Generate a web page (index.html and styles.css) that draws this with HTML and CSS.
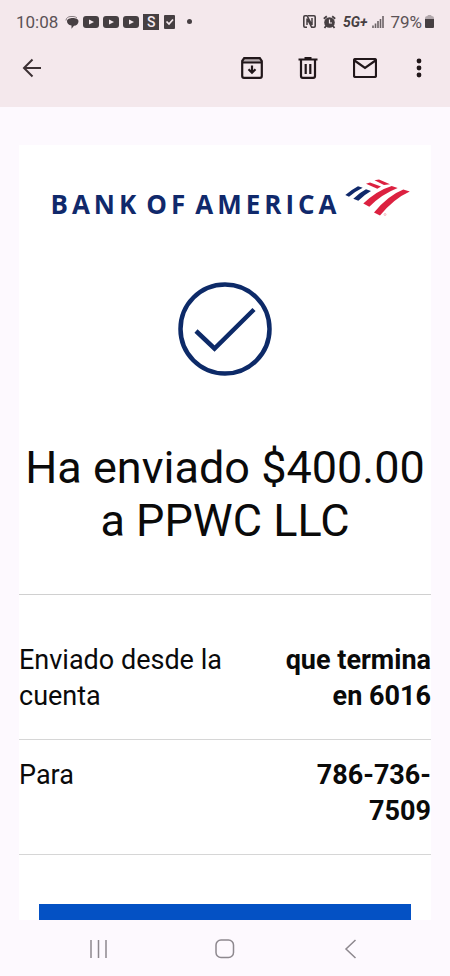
FILE: index.html
```html
<!DOCTYPE html>
<html lang="es">
<head>
<meta charset="utf-8">
<meta name="viewport" content="width=device-width, initial-scale=1">
<title>Ha enviado $400.00</title>
<link rel="stylesheet" href="styles.css">
</head>
<body>
<header class="top">
  <div class="status">
    <div class="status-group">
      <span class="time">10:08</span>
      <svg width="14" height="14" viewBox="0 0 14 14"><path d="M1 5.500C1 3 3 1.500 6 1.500h2q2.500 0 4 1.500" fill="none" stroke="#887f83"/><path d="M2 6.200C2 1.800 13.500 1.800 13.500 6.200c0 2.800-2 4.300-4.500 4.600L6.500 13.800V10.500C3.500 10 2 8.500 2 6.200z" fill="#463f42"/></svg>
      <svg width="16" height="12" viewBox="0 0 16 12"><rect width="16" height="12" rx="3" fill="#463f42"/><path d="M6 3.500l5 2.500-5 2.500z" fill="#f5e9ed"/></svg>
      <svg width="16" height="12" viewBox="0 0 16 12"><rect width="16" height="12" rx="3" fill="#463f42"/><path d="M6 3.500l5 2.500-5 2.500z" fill="#f5e9ed"/></svg>
      <svg width="16" height="12" viewBox="0 0 16 12"><rect width="16" height="12" rx="3" fill="#463f42"/><path d="M6 3.500l5 2.500-5 2.500z" fill="#f5e9ed"/></svg>
      <span class="s-badge">S</span>
      <svg class="check-icon" width="11" height="14" viewBox="0 0 11 14"><rect width="11" height="14" rx="1" fill="#463f42"/><path d="M2.500 6.500l2.500 2.500 4-4.500" fill="none" stroke="#f5e9ed" stroke-width="1.700"/></svg>
      <span class="dot"></span>
    </div>
    <div class="status-group right">
      <svg width="13" height="13" viewBox="0 0 13 13"><path d="M2 .7h2L9 10V3M9.500 12.300H8.700L4 3.500V10" fill="none" stroke="#463f42" stroke-width="1.500"/><path d="M5 .8h6q1.200 0 1.200 1.200v9q0 1.200-1.200 1.200H9M4 12.200H2Q.8 12.200.8 11V2Q.8.800 2 .8" fill="none" stroke="#463f42" stroke-width="1.600"/></svg>
      <svg class="alarm" width="13" height="14" viewBox="0 0 13 14"><circle cx="6.500" cy="7.500" r="5.300" fill="#463f42"/><path d="M.8 3.800l3-2.500M12.200 3.800l-3-2.500M3 11l-1.500 2M10 11l1.500 2" stroke="#463f42" stroke-width="1.800"/><path d="M6.500 4.500v3.500h2.500" fill="none" stroke="#f5e9ed" stroke-width="1.200"/></svg>
      <span class="network">5G+</span>
      <svg width="13" height="12" viewBox="0 0 13 12"><path d="M1 9.500V12M3.500 7.500V12M6 5v7M8.500 3v9M11 0v12" stroke="#6b6266" stroke-width="1.600"/></svg>
      <span class="percent">79%</span>
      <svg width="9" height="13" viewBox="0 0 9 13"><path d="M2.500 1q0-1 1-1h2q1 0 1 1Q9 1 9 3v1H0V3q0-2 2.500-2z" fill="#b1a7ab"/><path d="M0 4h9v8q0 1-1 1H1q-1 0-1-1z" fill="#463f42"/></svg>
    </div>
  </div>
  <div class="toolbar">
    <button class="icon-button back" aria-label="Atrás"><svg width="20" height="20" viewBox="0 0 20 20"><path d="M10.500 1.500L2 10l8.500 8.500M2 10h17" fill="none" stroke="#3c3134" stroke-width="2"/></svg></button>
    <button class="icon-button" aria-label="Archivar"><svg width="22" height="22" viewBox="0 0 22 22"><path d="M3.500 1.500h15L20.500 5h-19z" fill="#b7adb0"/><path d="M1.200 4L3.200 1.200h15.600L20.800 4v15q0 1.800-1.800 1.800H3q-1.800 0-1.800-1.800zM1.200 5.500h19.600M11 8.500v7M7.500 12.200l3.500 3.500 3.500-3.500" fill="none" stroke="#21171a" stroke-width="2.200"/></svg></button>
    <button class="icon-button" aria-label="Eliminar"><svg width="20" height="22" viewBox="0 0 20 22"><path d="M.500 2.500h19M6.500 1.200h7M3 3v16q0 1.800 1.800 1.800h10.400q1.800 0 1.800-1.800V3M7.700 7v10M12.300 7v10" fill="none" stroke="#21171a" stroke-width="2.200"/></svg></button>
    <button class="icon-button" aria-label="Marcar como no leído"><svg width="24" height="20" viewBox="0 0 24 20"><rect x="1" y="1" width="22" height="18" rx="1.500" fill="none" stroke="#21171a" stroke-width="2.200"/><path d="M1.500 2.500L12 10 22.500 2.500" fill="none" stroke="#21171a" stroke-width="2.200"/></svg></button>
    <button class="icon-button more" aria-label="Más opciones"><svg width="6" height="20" viewBox="0 0 6 20"><g fill="#21171a"><circle cx="3" cy="3" r="2.400"/><circle cx="3" cy="10" r="2.400"/><circle cx="3" cy="17" r="2.400"/></g></svg></button>
  </div>
</header>
<main class="mail">
  <article class="card">
    <div class="logo">
      <span class="wordmark"><span>BANK</span> <span>OF</span> <span>AMERICA</span></span>
      <svg class="flag" width="66" height="38" viewBox="0 0 66 38">
        <g fill="#10296b"><path d="M.3 16Q7 10.500 13 7.300l4.700 1.400Q10 12.500 4 17.700z"/><path d="M8.300 19.700Q14 14 21 10.300l5 1.700Q19 16 13.300 21.700z"/></g>
        <g fill="#dc2140"><path d="M21 4.700L25 3.500l11 4-3.700 2.200z"/><path d="M29.500 1.300L34 .5l11 4.700L39 6z"/><path d="M18.300 24.500Q32 11.500 46.700 7l6 2Q37 15 24.300 27.700z"/><path d="M29 33.500Q43 16.500 58.300 10.500l6.500 2Q49 19.500 35 36.500z"/></g>
        <circle cx="40" cy="35.500" r="1" fill="none" stroke="#e97b8b" stroke-width=".5"/>
      </svg>
    </div>
    <svg class="success" width="94" height="94" viewBox="0 0 94 94"><circle cx="47" cy="47" r="44.500" fill="none" stroke="#0d2a68" stroke-width="4.500"/><path d="M18 49l18.500 17.500L76 27.500" fill="none" stroke="#0d2a68" stroke-width="4.500"/></svg>
    <h1>Ha enviado $400.00 a PPWC LLC</h1>
    <dl class="details">
      <div class="row first"><dt>Enviado desde la cuenta</dt><dd>que termina en 6016</dd></div>
      <div class="row"><dt>Para</dt><dd>786-736-7509</dd></div>
    </dl>
    <a class="action" href="#" aria-label="Ver detalles"></a>
  </article>
</main>
<nav class="system">
  <button class="icon-button" aria-label="Recientes"><svg width="20" height="20" viewBox="0 0 20 20"><path d="M2 1v18M9.500 1v18M17 1v18" stroke="#8d888e" stroke-width="1.500"/></svg></button>
  <button class="icon-button" aria-label="Inicio"><svg width="20" height="20" viewBox="0 0 20 20"><rect x="1" y="1" width="17.500" height="17.500" rx="5" fill="none" stroke="#8d888e" stroke-width="1.500"/></svg></button>
  <button class="icon-button" aria-label="Volver"><svg width="20" height="20" viewBox="0 0 20 20"><path d="M14.500 1L5 10l9.500 9" fill="none" stroke="#8d888e" stroke-width="1.500"/></svg></button>
</nav>
</body>
</html>
```
FILE: styles.css
```css
* { box-sizing: border-box; }

body {
  margin: 0;
  height: 100vh;
  display: flex;
  flex-direction: column;
  background: #fdf9fe;
  color: #0a0a0a;
  font-family: Roboto, "Liberation Sans", sans-serif;
}

svg { display: block; flex: none; }

.top {
  flex: none;
  background: #f4e8ec;
  padding-bottom: 14px;
}

.status {
  display: flex;
  justify-content: space-between;
  align-items: center;
  height: 43px;
  padding: 0 16px;
  color: #5b5256;
  font-size: 17px;
}

.status-group {
  display: flex;
  align-items: center;
  gap: 4px;
}

.status-group .time { margin-right: 3px; }
.status-group.right { gap: 5px; }
.alarm { margin: 0 2px; }

.s-badge {
  width: 16px;
  height: 16px;
  background: #463f42;
  color: #f5e9ed;
  font-size: 14px;
  font-weight: 500;
  line-height: 16px;
  text-align: center;
}

.check-icon { margin: 0 8px 0 1px; }

.dot {
  width: 5px;
  height: 5px;
  border-radius: 50%;
  background: #463f42;
}

.network {
  color: #463f42;
  font-size: 14px;
  font-style: italic;
  font-weight: 700;
}

.percent { margin-right: -2px; }

.toolbar {
  display: flex;
  align-items: center;
  gap: 35px;
  height: 50px;
  padding: 0 28px 0 22px;
}

.icon-button {
  display: flex;
  align-items: center;
  justify-content: center;
  padding: 0;
  border: 0;
  background: none;
}

.back { margin-right: auto; }

.more { margin-left: 4px; }

.mail {
  flex: 1;
  min-height: 0;
  overflow: hidden;
  padding: 38px 19px 0;
}

.card {
  display: flex;
  flex-direction: column;
  background: #fff;
  padding-top: 34px;
}

.logo {
  display: flex;
  justify-content: center;
  gap: 4px;
  padding-left: 11px;
}

.wordmark {
  display: flex;
  gap: 6px;
  padding-top: 8px;
  color: #10296b;
  font-family: "Open Sans", "Noto Sans", sans-serif;
  font-size: 26px;
  font-weight: 700;
  line-height: 34px;
  letter-spacing: 4px;
}

.success {
  align-self: center;
  margin-top: 61px;
}

h1 {
  margin: 65px 0 47px;
  font-size: 45px;
  font-weight: 400;
  line-height: 53px;
  text-align: center;
}

.details {
  margin: 0;
  border-top: 1px solid #d0d0d0;
  font-size: 27px;
  line-height: 36px;
}

.row {
  display: flex;
  justify-content: space-between;
  padding: 17px 0 25px;
  border-bottom: 1px solid #d6d6d6;
}

.row.first { padding-top: 47px; }

dt { width: 52%; }

dd {
  width: 40%;
  margin: 0;
  font-weight: 700;
  text-align: right;
}

.action {
  display: block;
  height: 64px;
  margin: 49px 20px 40px;
  background: #0451c4;
}

.system {
  flex: none;
  display: flex;
  justify-content: space-around;
  align-items: center;
  height: 56px;
  padding: 2px 36px 0;
}
```
